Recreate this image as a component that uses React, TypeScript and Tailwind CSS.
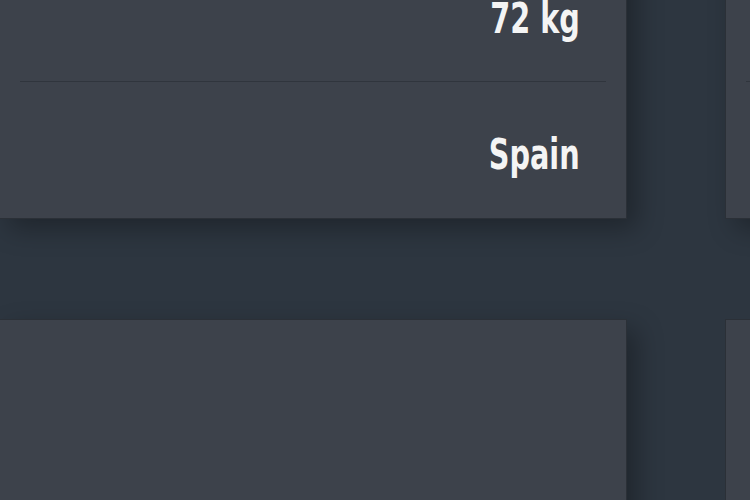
import React from 'react';

function Row({ value, last }: { value?: string; last?: boolean }) {
  return (
    <div className={`mx-5 h-[136px] flex items-center justify-end pr-[26px] pt-[10px] ${last ? '' : 'border-b border-[#30353d]'}`}>
      {value && (
        <span className="inline-block font-['DejaVu_Sans_Condensed',sans-serif] font-bold text-[42px] leading-none text-[#f4f4f4] origin-right scale-x-[0.76]">
          {value}
        </span>
      )}
    </div>
  );
}

function Card({ weight, country }: { weight?: string; country?: string }) {
  return (
    <div className="bg-[#3d424b] border border-[#2b3037] shadow-[10px_10px_25px_rgba(0,0,0,0.3)]">
      <Row value={weight} />
      <Row value={country} last />
    </div>
  );
}

export default function App() {
  return (
    <div className="w-[750px] h-[500px] overflow-hidden bg-[#2d3640]">
      <div className="mt-[-55px] ml-[-1px] grid grid-cols-[628px_628px] gap-x-[98px] gap-y-[100px]">
        <Card weight="72 kg" country="Spain" />
        <Card />
        <div className="bg-[#3d424b] border border-[#2b3037] h-[400px] shadow-[10px_10px_25px_rgba(0,0,0,0.3)]" />
        <div className="bg-[#3d424b] border border-[#2b3037] h-[400px]" />
      </div>
    </div>
  );
}
